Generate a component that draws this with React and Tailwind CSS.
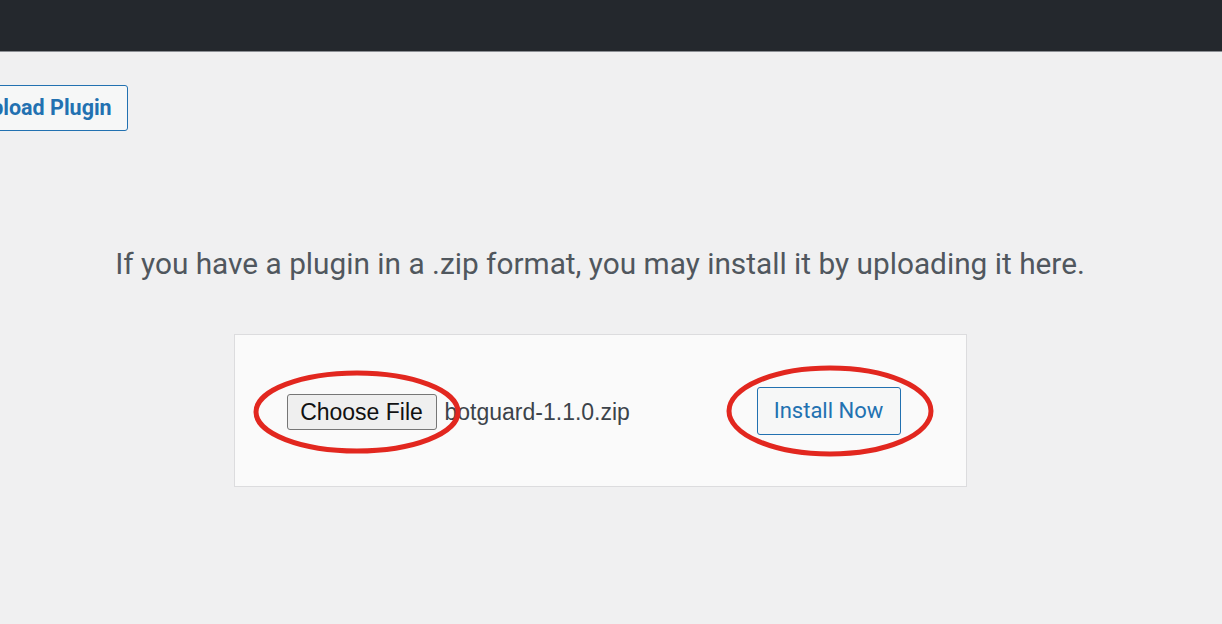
import React from "react";

export default function App() {
  return (
    <div className="min-h-screen w-[1222px] h-[624px] overflow-hidden bg-[#f0f0f1] font-['Roboto',sans-serif]">
      {/* Admin bar */}
      <div className="h-[52px] bg-[#24282d] border-b border-[#8c8f94]"></div>

      {/* Upload Plugin toggle */}
      <div className="pt-[33px]">
        <button
          type="button"
          className="-ml-[39px] h-[46px] px-[15px] rounded-[3px] border border-[#2271b1] bg-[#f6f7f7] text-[#2271b1] text-[21.5px] font-bold leading-none"
        >
          Upload Plugin
        </button>
      </div>

      {/* Upload area */}
      <div className="flex flex-col items-center pr-[22px]">
        <p className="mt-[113px] text-[29.8px] leading-[40px] text-[#50575e]">
          If you have a plugin in a .zip format, you may install it by uploading it here.
        </p>

        <div className="relative mt-[50px] w-[733px] h-[153px] border border-[#dcdcde] bg-[#fafafa] flex items-center pl-[52px] pr-[65px]">
          <div className="flex items-center mt-[3px]">
            <button
              type="button"
              className="h-[36px] w-[150px] rounded-[3px] border border-[#767676] bg-[#efefef] text-[23px] text-[#111] font-['Liberation_Sans',Arial,sans-serif] leading-none"
            >
              Choose File
            </button>
            <span className="ml-[8px] text-[23px] text-[#3c434a] font-['Liberation_Sans',Arial,sans-serif]">
              botguard-1.1.0.zip
            </span>
          </div>
          <button
            type="button"
            className="ml-auto h-[48px] w-[144px] rounded-[3px] border border-[#2271b1] bg-[#f6f7f7] text-[#2271b1] text-[22px] leading-none"
          >
            Install Now
          </button>

          {/* red annotation circles */}
          <svg
            className="absolute left-0 top-0 pointer-events-none"
            width="733"
            height="153"
            viewBox="0 0 733 153"
          >
            <ellipse cx="122" cy="77" rx="101" ry="39" fill="none" stroke="#e2271f" strokeWidth="5" />
            <ellipse cx="595" cy="76" rx="101" ry="43" fill="none" stroke="#e2271f" strokeWidth="5" />
          </svg>
        </div>
      </div>
    </div>
  );
}
